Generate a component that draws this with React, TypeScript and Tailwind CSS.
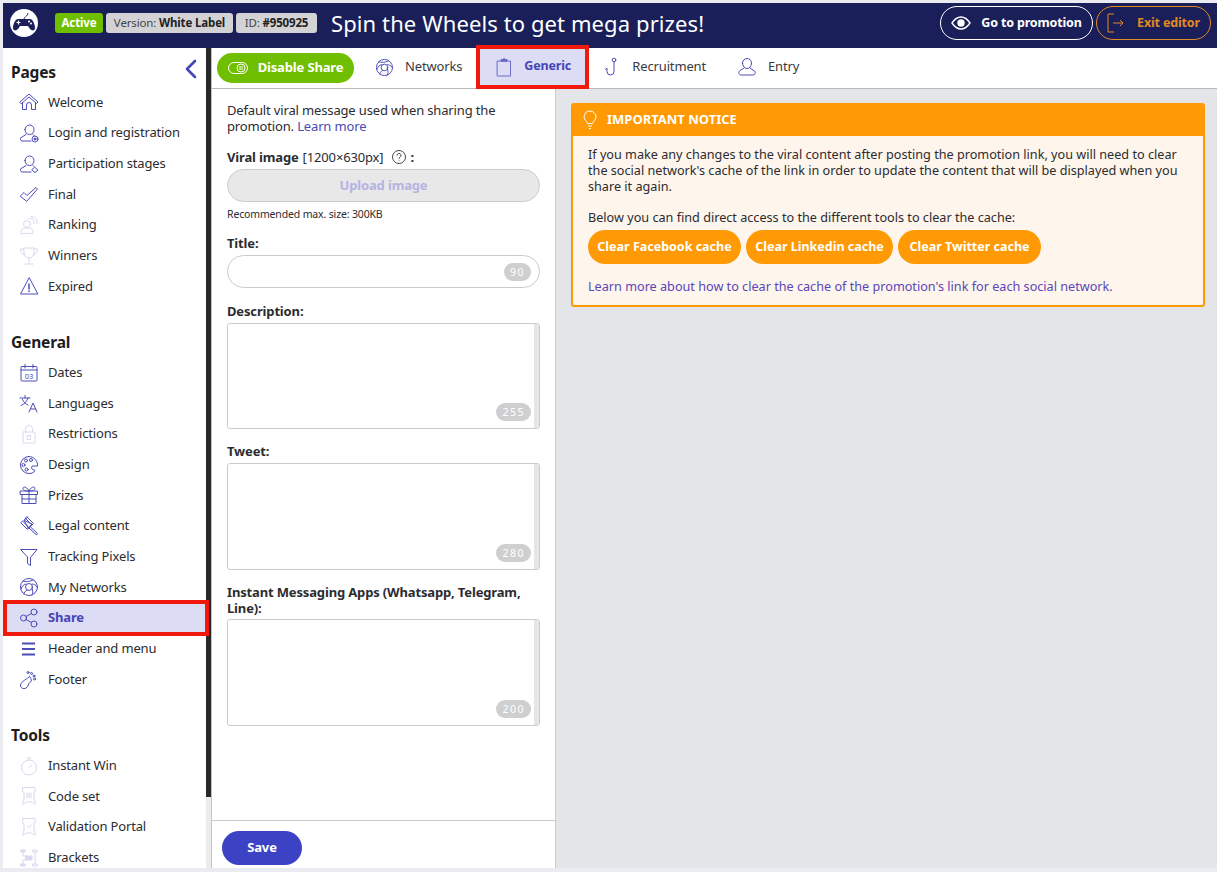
import type { ReactNode } from 'react';

/* ─── Icons ─────────────────────────────────────────────── */

function Ico({ children, faded, size = 20, color }: { children: ReactNode; faded?: boolean; size?: number; color?: string }) {
  return (
    <svg width={size} height={size} viewBox="0 0 20 20" fill="none" stroke={color ?? (faded ? '#d8d8ee' : '#4a4cb8')} strokeWidth="1" strokeLinecap="round" strokeLinejoin="round" className="shrink-0">
      {children}
    </svg>
  );
}

const Home = () => <Ico><path d="M1 10 10 2l9 8-1.500 1.500L10 5l-7.500 6.500z" /><path d="M3.500 11v6.500h4V13a2.500 2.500 0 0 1 5 0v4.500h4V11" /></Ico>;
const UserDot = ({ plus }: { plus?: boolean }) => (
  <Ico>
    <path d="M6 6.500a4.500 4.500 0 0 1 9 0c0 2.500-1.500 5-4.500 5S6 9 6 6.500z" />
    <path d="M7 11.500 3 14a2 2 0 0 0 1 4h8" />
    <path d="M14 11.500l1 1" />
    {plus ? <path d="M16 13.500l3 2.500-3 2.500-3-2.500z" /> : <><circle cx="16" cy="16" r="3" /><circle cx="16" cy="16" r="1" fill="#4a4cb8" /></>}
  </Ico>
);
const Check = () => <Ico><path d="M1.500 12 5 8.500l3 3L17 3.500l1.500 1.500L8 17z" /></Ico>;
const Ranking = () => <Ico faded><circle cx="8" cy="9" r="3.500" /><path d="M2 18v-2c0-2 2-3 6-3s6 1 6 3v2z" /><path d="M10 3.500a4 4 0 0 1 5 5M12 1.500a5.500 5.500 0 0 1 6 7" /></Ico>;
const Trophy = () => <Ico faded><path d="M5 2h10v5a5 5 0 0 1-10 0z" /><path d="M5 3H1.500c0 3 1 5 4 6M15 3h3.500c0 3-1 5-4 6M10 12v5M6 18h8" /></Ico>;
const Warn = () => <Ico><path d="M10 2 1.500 18h17z" /><path d="M10 8v5M10 15v.5" strokeWidth="1.500" /></Ico>;
const Calendar = () => (
  <Ico>
    <rect x="2" y="3.500" width="16" height="14.500" rx="1" />
    <path d="M2 7h16M6 1.500v3.500M14 1.500v3.500" />
    <text x="10" y="15.500" textAnchor="middle" fontSize="7.500" fill="#4a4cb8" stroke="none">03</text>
  </Ico>
);
const Lang = () => <Ico><path d="M1 5h10M6 2.500V5M9 5c-1 3.500-3.500 6-7 7.500M3.500 6.500c1 2.500 3 4.500 5.500 5.500" /><path d="M10 19l4-9 4 9M11.500 16h5" /></Ico>;
const Lock = () => <Ico faded><rect x="4" y="8" width="12" height="11" rx=".5" /><path d="M6.500 8V5a3.500 3.500 0 0 1 7 0v3" /><rect x="8.500" y="11.500" width="3" height="4" /></Ico>;
const Palette = () => <Ico><path d="M10 1.500a8.500 8.500 0 1 0 0 17c3 0 5-1 6-3l-3-1.500c-1-1-.5-3 1-3h4.500c.5-5-3.500-9.500-8.500-9.500z" /><circle cx="7" cy="5.500" r="1.500" /><circle cx="12" cy="5" r="1.500" /><circle cx="4.500" cy="10" r="1.500" /><circle cx="7.500" cy="14.500" r="1.500" /></Ico>;
const Gift = () => <Ico><rect x="1.500" y="6" width="17" height="3.500" /><path d="M3 9.500V18.500h14V9.500M10 6v12.500M3 14h14" /><path d="M10 6C8 1.500 4 1 4 3.500 4 5 6 6 10 6c4 0 6-1 6-2.500C16 1 12 1.500 10 6z" /></Ico>;
const Gavel = () => <Ico><path d="M8 1l6.500 6.500-1.500 1.500L6.500 2.500zM2 6.500 3.500 5 10 11.500 8.500 13zM5 4l4-3M9 12.500l4.500-4" /><path d="M5.500 4.500 13 8l-3.500 4zM11 10.500l7 6.500c.8 1 0 2-1 1.500l-7-6.500" /></Ico>;
const Funnel = () => <Ico><path d="M2 2.500h16L11.500 10.500V18.500L8.500 16.500V10.500z" /></Ico>;
const Globe = ({ size }: { size?: number }) => (
  <Ico size={size}>
    <circle cx="10" cy="10" r="8.500" />
    <circle cx="10" cy="10" r="3.500" />
    <path d="M4 4c3 1 6 1 10-1M2 12c1-3 3-5 5-5M13 7c2 0 4 1 5 3M13 11c1 3 1 5 0 7M8 13c-2 1-3 3-3 4" />
  </Ico>
);
const Share = () => <Ico><circle cx="4.500" cy="10" r="3" /><circle cx="15" cy="4" r="3" /><circle cx="15" cy="16" r="3" /><path d="M7 8.500l5.500-3M7 11.500l5.500 3" /></Ico>;
const Burger = () => <Ico><path d="M3 4.500h13M3 10h13M3 15.500h13" strokeWidth="2" strokeLinecap="butt" /></Ico>;
const Foot = () => <Ico><path d="M10.500 6.500C9 9 2 11 1.500 15c-.3 3 3 4.500 5.500 3 3-1.500 1.500-4 4.500-6 1.500-1 1-3.500-1-5.500z" /><circle cx="9" cy="2.500" r="1" /><circle cx="12.500" cy="3.500" r="1" /><circle cx="15" cy="6" r="1" /><circle cx="15.500" cy="9" r="1" /></Ico>;
const Stopwatch = () => <Ico faded><circle cx="10" cy="11.500" r="7.500" /><path d="M8.500 2h3M10 2v2M10 11.500l3-3" /></Ico>;
const Ticket = ({ check }: { check?: boolean }) => (
  <Ico faded>
    <path d="M4 1.500h12V6l-1 .5V14l1 .5v4l-3-2.500H7l-3 2.500v-4l1-.5V6.500L4 6z" />
    {check ? <path d="M8 9l1.500 1.500L12.500 8" /> : <path d="M8 7v5M10 7v5M12 7v5" />}
  </Ico>
);
const Brackets = () => <Ico faded><rect x="2" y="2" width="4" height="2" fill="#d8d8ee" /><rect x="2" y="16" width="4" height="2" fill="#d8d8ee" /><rect x="7" y="8" width="6" height="4" fill="#d8d8ee" /><rect x="14" y="2" width="4" height="2" /><rect x="14" y="16" width="4" height="2" /><path d="M4 4v4h3M4 16v-4h3M16 4v12" /></Ico>;
const Clipboard = () => <Ico color="#6a6cc8"><rect x="3.500" y="4" width="13" height="15" /><path d="M7 4V2.500h2.500L10 1l.5 1.500H13V4z" fill="#6a6cc8" /></Ico>;
const Hook = () => <Ico><circle cx="12" cy="3" r="1.800" /><path d="M12 5v9.500a3.500 3.500 0 0 1-7 0V11l-1.500 1.500" /></Ico>;
const User = () => <Ico><path d="M5.500 6a4.500 4.500 0 0 1 9 0c0 3-2 5.500-4.500 5.500S5.500 9 5.500 6z" /><path d="M7 11 2.500 14c-1.500 1.500-.5 4 1.500 4h12c2 0 3-2.500 1.500-4L13 11" /></Ico>;

function Logo() {
  return (
    <svg width="28" height="28" viewBox="0 0 28 28" className="shrink-0">
      <circle cx="14" cy="14" r="14" fill="#fff" />
      <path d="M14 10c1-3 3-2 4-6" stroke="#1a1f5a" strokeWidth="1" fill="none" />
      <path d="M8 10h12c3 0 5 6 5 9 0 3-3 3-5 1l-2-3h-8l-2 3c-2 2-5 2-5-1 0-3 2-9 5-9z" fill="#1a1f5a" />
      <path d="M6.500 13.500h4M8.500 11.500v4" stroke="#fff" strokeWidth="1.200" />
      <circle cx="19" cy="12.500" r="1" fill="#fff" />
      <circle cx="21" cy="14.500" r="1" fill="#fff" />
    </svg>
  );
}

/* ─── Sidebar ───────────────────────────────────────────── */

const pages = [
  { label: 'Welcome', icon: <Home /> },
  { label: 'Login and registration', icon: <UserDot /> },
  { label: 'Participation stages', icon: <UserDot plus /> },
  { label: 'Final', icon: <Check /> },
  { label: 'Ranking', icon: <Ranking /> },
  { label: 'Winners', icon: <Trophy /> },
  { label: 'Expired', icon: <Warn /> },
];

const general = [
  { label: 'Dates', icon: <Calendar /> },
  { label: 'Languages', icon: <Lang /> },
  { label: 'Restrictions', icon: <Lock /> },
  { label: 'Design', icon: <Palette /> },
  { label: 'Prizes', icon: <Gift /> },
  { label: 'Legal content', icon: <Gavel /> },
  { label: 'Tracking Pixels', icon: <Funnel /> },
  { label: 'My Networks', icon: <Globe /> },
  { label: 'Share', icon: <Share />, active: true },
  { label: 'Header and menu', icon: <Burger /> },
  { label: 'Footer', icon: <Foot /> },
];

const tools = [
  { label: 'Instant Win', icon: <Stopwatch /> },
  { label: 'Code set', icon: <Ticket /> },
  { label: 'Validation Portal', icon: <Ticket check /> },
  { label: 'Brackets', icon: <Brackets /> },
];

type Item = { label: string; icon: ReactNode; active?: boolean };

function NavRow({ item }: { item: Item }) {
  if (item.active) {
    return (
      <div className="relative z-10 -my-[2.650px] flex h-[36px] w-[206px] items-center gap-[9px] border-4 border-[#f0190c] bg-[#dcdcf5] pl-[12px] text-[13px] font-bold text-[#4446b8]">
        {item.icon}
        <span>{item.label}</span>
      </div>
    );
  }
  return (
    <div className="flex h-[30.700px] items-center gap-[9px] pl-[16px] text-[13px] text-[#2c2c30]">
      {item.icon}
      <span>{item.label}</span>
    </div>
  );
}

function Sidebar() {
  return (
    <aside className="relative w-[209px] shrink-0 overflow-hidden border-r border-[#c4c4c4]">
      <div className="w-[206px] bg-white">
        <div className="flex h-[39px] items-end justify-between pr-[12px] pb-[3px] pl-[8px]">
          <h2 className="text-[15.500px] leading-[24px] font-bold text-[#1d1d1f]">Pages</h2>
          <svg width="12" height="20" viewBox="0 0 12 20" fill="none" stroke="#4446b8" strokeWidth="2.600" strokeLinecap="round" strokeLinejoin="round" className="mb-[5px]">
            <path d="M10 2 2 10l8 8" />
          </svg>
        </div>
        <div>
          {pages.map((p) => <NavRow key={p.label} item={p} />)}
        </div>
        <h2 className="mt-[28px] pl-[8px] text-[15.500px] leading-[24px] font-bold text-[#1d1d1f]">General</h2>
        <div className="pt-[3.500px]">
          {general.map((p) => <NavRow key={p.label} item={p} />)}
        </div>
        <h2 className="mt-[28.500px] pl-[8px] text-[15.500px] leading-[24px] font-bold text-[#1d1d1f]">Tools</h2>
        <div className="pt-[3px]">
          {tools.map((p) => <NavRow key={p.label} item={p} />)}
        </div>
      </div>
      {/* scrollbar */}
      <div className="absolute top-0 right-0 bottom-0 w-[5px] bg-[#ececec]">
        <div className="h-[749px] bg-[#26282c]" />
      </div>
    </aside>
  );
}

/* ─── Form pieces ───────────────────────────────────────── */

function Area({ n, className }: { n: number; className: string }) {
  return (
    <div className={`relative rounded-[3px] border border-[#cccccc] bg-white ${className}`}>
      <div className="absolute top-0 right-0 bottom-0 w-[5px] bg-[#e6e6e6]" />
      <span className="absolute right-[8px] bottom-[7px] rounded-full bg-[#cfcfcf] px-[6px] text-[10.500px] leading-[18px] tracking-[1.500px] text-white">
        {n}
      </span>
    </div>
  );
}

function Tab({ icon, label, className }: { icon: ReactNode; label: string; className: string }) {
  return (
    <div className={`-mt-[2px] flex items-center text-[13px] text-[#3a3a3e] ${className}`}>
      {icon}
      <span>{label}</span>
    </div>
  );
}

/* ─── App ───────────────────────────────────────────────── */

export default function App() {
  return (
    <div className="flex h-[872px] w-[1217px] flex-col overflow-hidden bg-[#ebecf2] pt-[3px] pb-[4px] pl-[3px] font-['Noto_Sans',sans-serif] tracking-[-0.15px]">
      <header className="flex h-[45px] shrink-0 items-center bg-[#1a1f5a] pr-[6px] pb-[5px] pl-[7px]">
        <Logo />
        <div className="ml-[17px] flex h-[20px] w-[48px] items-center justify-center rounded-[3px] bg-[#6fbf00] text-[11.500px] font-bold text-white">Active</div>
        <div className="ml-[3px] flex h-[20px] w-[127px] items-center justify-center rounded-[3px] bg-[#d3d3d6] text-[11.500px] text-[#444]">
          Version:&nbsp;<b className="text-[#222]">White Label</b>
        </div>
        <div className="ml-[3px] flex h-[20px] w-[81px] items-center justify-center rounded-[3px] bg-[#d3d3d6] text-[11.500px] text-[#444]">
          ID:&nbsp;<b className="text-[#222]">#950925</b>
        </div>
        <h1 className="ml-[14px] text-[22px] tracking-[0.1px] text-white">Spin the Wheels to get mega prizes!</h1>
        <div className="ml-auto flex h-[34px] w-[153px] items-center justify-center gap-[10px] rounded-full border border-white text-[12.500px] font-bold text-white">
          <svg width="20" height="14" viewBox="0 0 20 14" fill="none" stroke="#fff" strokeWidth="1.400">
            <path d="M1 7c3-4.500 6-6 9-6s6 1.500 9 6c-3 4.500-6 6-9 6S4 11.500 1 7z" />
            <circle cx="10" cy="7" r="3" fill="#fff" />
          </svg>
          Go to promotion
        </div>
        <div className="ml-[3px] flex h-[34px] w-[115px] items-center justify-center gap-[12px] rounded-full border border-[#e08a22] text-[12.500px] font-bold text-[#e08a22]">
          <svg width="18" height="20" viewBox="0 0 18 20" fill="none" stroke="#e08a22" strokeWidth="1">
            <path d="M7 1H1v18h6M6 10h10M13 7l3 3-3 3" />
          </svg>
          Exit editor
        </div>
      </header>

      <div className="flex min-h-0 flex-1">
        <Sidebar />
        <main className="flex min-w-0 flex-1 flex-col bg-[#e3e5e8]">
          <nav className="flex h-[41px] shrink-0 items-center border-b border-[#b8b8b8] bg-white pl-[5px]">
            <div className="flex h-[30px] w-[137px] items-center justify-center gap-[10px] rounded-full bg-[#6fbf00] text-[13px] font-bold text-white">
              <svg width="20" height="12" viewBox="0 0 20 12" fill="none" stroke="#fff" strokeWidth="1">
                <rect x=".5" y=".5" width="19" height="11" rx="5.500" />
                <circle cx="13" cy="6" r="4" />
                <path d="M12 4v4M14 4v4" />
              </svg>
              Disable Share
            </div>
            <Tab icon={<Globe size={19} />} label="Networks" className="ml-[21px] gap-[11px]" />
            <div className="relative z-10 -mt-[3px] ml-[14px] flex h-[44px] w-[113px] items-center gap-[10px] border-4 border-[#f0190c] bg-[#dcdcf5] pl-[14px] text-[12.500px] font-bold text-[#4446b8]">
              <Clipboard />
              Generic
            </div>
            <Tab icon={<Hook />} label="Recruitment" className="ml-[13px] gap-[10px]" />
            <Tab icon={<User />} label="Entry" className="ml-[31px] gap-[11px]" />
          </nav>

          <div className="flex min-h-0 flex-1">
            <section className="flex w-[344px] shrink-0 flex-col border-r border-[#cccccc] bg-white">
              <div className="flex-1 px-[15px] pt-[13px] text-[13px] leading-[16px] text-[#2c2c30]">
                <p>
                  Default viral message used when sharing the promotion. <span className="text-[#4a4cb0]">Learn more</span>
                </p>
                <div className="mt-[15px] flex items-center leading-[16px]">
                  <b>Viral image</b>
                  <span className="ml-[4px]">[1200×630px]</span>
                  <svg width="16" height="16" viewBox="0 0 16 16" fill="none" stroke="#333" strokeWidth=".9" className="ml-[8px]">
                    <circle cx="8" cy="8" r="6.500" />
                    <path d="M6 6.500a2 2 0 1 1 3 1.700c-.7.400-1 .8-1 1.500M8 11.300v.5" />
                  </svg>
                  <b className="ml-[3px]">:</b>
                </div>
                <div className="mt-[4px] flex h-[33px] items-center justify-center rounded-full border border-[#cccccc] bg-[#e8e8e8] pb-[1px] font-bold text-[#b5b3e2]">Upload image</div>
                <p className="mt-[4px] text-[10.500px] leading-[16px]">Recommended max. size: 300KB</p>
                <p className="mt-[13px] font-bold">Title:</p>
                <div className="relative mt-[4px] h-[33px] rounded-full border border-[#cccccc]">
                  <span className="absolute right-[8px] bottom-[6px] rounded-full bg-[#cfcfcf] px-[6px] text-[10.500px] leading-[18px] tracking-[1.500px] text-white">90</span>
                </div>
                <p className="mt-[15px] font-bold">Description:</p>
                <Area n={255} className="mt-[4px] h-[106px]" />
                <p className="mt-[14px] font-bold">Tweet:</p>
                <Area n={280} className="mt-[4px] h-[107px]" />
                <p className="mt-[14px] font-bold">Instant Messaging Apps (Whatsapp, Telegram, Line):</p>
                <Area n={200} className="mt-[3px] h-[107px]" />
              </div>
              <div className="flex h-[48px] shrink-0 items-start border-t border-[#cccccc] pt-[10px] pl-[10px]">
                <div className="flex h-[34px] w-[80px] items-center justify-center rounded-full bg-[#3b42c4] text-[13px] font-bold text-white">Save</div>
              </div>
            </section>

            <section className="min-w-0 flex-1 pt-[14px] pr-[12px] pl-[15px] tracking-normal">
              <div className="overflow-hidden rounded-[3px] border-2 border-[#ff9a05] bg-[#fef5ec]">
                <div className="flex h-[31px] items-center gap-[10px] bg-[#ff9a05] pb-[2px] pl-[10px] text-[13px] font-bold text-white">
                  <svg width="14" height="20" viewBox="0 0 14 20" fill="none" stroke="#fff" strokeWidth="1">
                    <path d="M4.500 13.500C4 11 1 10 1 7a6 6 0 0 1 12 0c0 3-3 4-3.500 6.500zM5 16h4M6 18.500h2" />
                  </svg>
                  IMPORTANT NOTICE
                </div>
                <div className="px-[15px] pt-[10px] pb-[11px] text-[12.650px] leading-[16px] text-[#2c2c30]">
                  <p>If you make any changes to the viral content after posting the promotion link, you will need to clear the social network's cache of the link in order to update the content that will be displayed when you share it again.</p>
                  <p className="mt-[15px]">Below you can find direct access to the different tools to clear the cache:</p>
                  <div className="mt-[5px] flex gap-[5px] text-[12.500px] font-bold text-white">
                    <div className="flex h-[34px] w-[153px] items-center justify-center rounded-full bg-[#ff9a05]">Clear Facebook cache</div>
                    <div className="flex h-[34px] w-[147px] items-center justify-center rounded-full bg-[#ff9a05]">Clear Linkedin cache</div>
                    <div className="flex h-[34px] w-[143px] items-center justify-center rounded-full bg-[#ff9a05]">Clear Twitter cache</div>
                  </div>
                  <p className="mt-[14px] text-[#5a47b8]">Learn more about how to clear the cache of the promotion's link for each social network.</p>
                </div>
              </div>
            </section>
          </div>
        </main>
      </div>
    </div>
  );
}
